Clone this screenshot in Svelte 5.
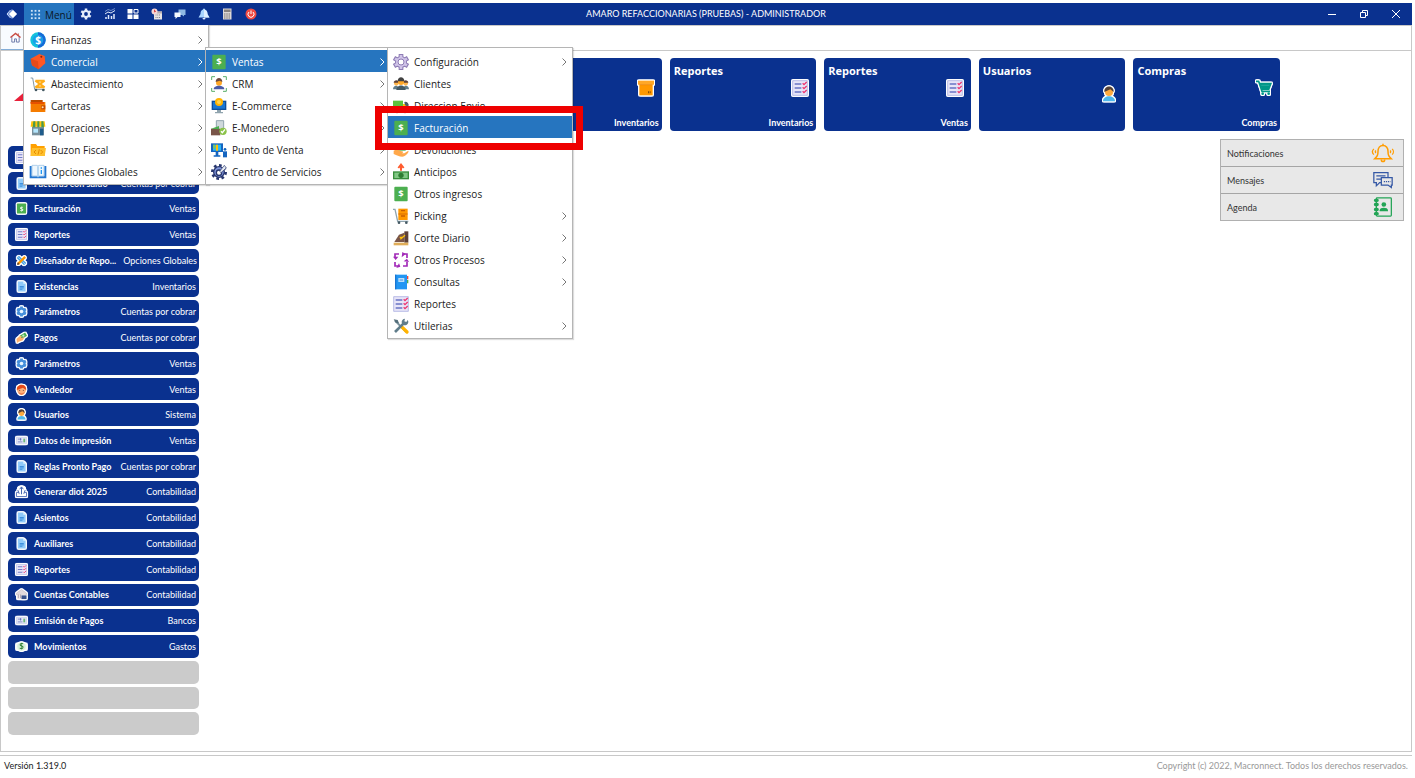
<script>
  const tools = [
    ['gear', 'Configuración'], ['chart', 'Indicadores'], ['tiles', 'Paneles'], ['calendar', 'Calendario'],
    ['chats', 'Mensajes'], ['bell', 'Notificaciones'], ['calc', 'Calculadora'], ['power', 'Salir']
  ];

  const salesMenu = [
    { icon: 'cog', label: 'Configuración', more: true },
    { icon: 'people', label: 'Clientes' },
    { icon: 'truck', label: 'Direccion Envio' },
    { icon: 'money', label: 'Facturación', active: true },
    { icon: 'refund', label: 'Devoluciones' },
    { icon: 'advance', label: 'Anticipos' },
    { icon: 'money', label: 'Otros ingresos' },
    { icon: 'picking', label: 'Picking', more: true },
    { icon: 'register', label: 'Corte Diario', more: true },
    { icon: 'cycle', label: 'Otros Procesos', more: true },
    { icon: 'book', label: 'Consultas', more: true },
    { icon: 'report', label: 'Reportes' },
    { icon: 'wrench', label: 'Utilerias', more: true }
  ];

  const commerceMenu = [
    { icon: 'money', label: 'Ventas', more: true, active: true, items: salesMenu },
    { icon: 'crm', label: 'CRM', more: true },
    { icon: 'ecommerce', label: 'E-Commerce', more: true },
    { icon: 'wallet2', label: 'E-Monedero', more: true },
    { icon: 'pos', label: 'Punto de Venta', more: true },
    { icon: 'service', label: 'Centro de Servicios', more: true }
  ];

  const mainMenu = [
    { icon: 'finance', label: 'Finanzas', more: true },
    { icon: 'tag', label: 'Comercial', more: true, active: true, items: commerceMenu },
    { icon: 'supply', label: 'Abastecimiento', more: true },
    { icon: 'wallet', label: 'Carteras', more: true },
    { icon: 'shop', label: 'Operaciones', more: true },
    { icon: 'folder', label: 'Buzon Fiscal', more: true },
    { icon: 'openbook', label: 'Opciones Globales', more: true }
  ];

  const shortcuts = [
    ['report', 'Reportes', 'Inventarios'],
    ['doc', 'Facturas con saldo', 'Cuentas por cobrar'],
    ['money', 'Facturación', 'Ventas'],
    ['report', 'Reportes', 'Ventas'],
    ['design', 'Diseñador de Repo...', 'Opciones Globales'],
    ['doc', 'Existencias', 'Inventarios'],
    ['params', 'Parámetros', 'Cuentas por cobrar'],
    ['pay', 'Pagos', 'Cuentas por cobrar'],
    ['params', 'Parámetros', 'Ventas'],
    ['seller', 'Vendedor', 'Ventas'],
    ['user', 'Usuarios', 'Sistema'],
    ['card', 'Datos de impresión', 'Ventas'],
    ['doc', 'Reglas Pronto Pago', 'Cuentas por cobrar'],
    ['upload', 'Generar diot 2025', 'Contabilidad'],
    ['doc', 'Asientos', 'Contabilidad'],
    ['doc', 'Auxiliares', 'Contabilidad'],
    ['report', 'Reportes', 'Contabilidad'],
    ['bank', 'Cuentas Contables', 'Contabilidad'],
    ['card', 'Emisión de Pagos', 'Bancos'],
    ['expense', 'Movimientos', 'Gastos'],
    null, null, null
  ];

  const cards = [
    ['money', 'Facturación', 'Ventas'],
    ['doc', 'Existencias', 'Inventarios'],
    ['box', '', 'Inventarios'],
    ['report', 'Reportes', 'Inventarios'],
    ['report', 'Reportes', 'Ventas'],
    ['user', 'Usuarios', ''],
    ['cart', 'Compras', 'Compras']
  ];

  const panels = [['ring', 'Notificaciones'], ['talk', 'Mensajes'], ['agenda', 'Agenda']];
</script>

{#snippet icon(name)}
  <svg class="icon" viewBox="0 0 24 24" aria-hidden="true">
    {#if name === 'logo'}
      <path d="M12 2l10 10-10 10L2 12z" fill="#6f8fd8" /><path d="M14 4l8 8-8 8-8-8z" fill="#fff" /><path d="M9 4l-7 8 7 8" fill="none" stroke="#cfdcfa" stroke-width="2" />
    {:else if name === 'apps'}
      {#each [2, 10, 18] as y}{#each [2, 10, 18] as x}<rect {x} {y} width="4" height="4" fill="#cfe4f8" />{/each}{/each}
    {:else if name === 'gear'}
      <g stroke="#e6edfb" stroke-width="5"><path d="M12 1v22M2.500 6.500l19 11M2.500 17.500l19-11" /></g><circle cx="12" cy="12" r="8" fill="#e6edfb" /><circle cx="12" cy="12" r="3.800" fill="#0a318f" />
    {:else if name === 'chart'}
      <path d="M4 22v-4M9 22v-8M15 22v-6M20 22V12" stroke="#dfe8fb" stroke-width="3" /><path d="M2 12l6-4 6 2 8-5" fill="none" stroke="#dfe8fb" stroke-width="2" /><path d="M2 7l6-4 6 2 8-4" fill="none" stroke="#91a9dc" stroke-width="1.500" />
    {:else if name === 'tiles'}
      <path d="M1 2h10v9H1zM1 13h10v9H1zM13 13h10v9H13z" fill="#fff" /><path d="M14 3h8v7h-8z" fill="none" stroke="#fff" stroke-width="2" />
    {:else if name === 'calendar'}
      <path d="M6 7h16v16H6z" fill="#e8e4e4" /><path d="M6 7h16v4H6z" fill="#b9aeb2" /><path d="M9 14h10M9 19h10" stroke="#8b8790" stroke-width="2" stroke-dasharray="2 1.500" /><circle cx="7" cy="7" r="6" fill="#f7d5d5" /><path d="M7 3.500V8l3-2" fill="none" stroke="#d94848" stroke-width="2" />
    {:else if name === 'chats'}
      <path d="M9 3h14v11h-3v3l-4-3H9z" fill="#8fb9e4" /><path d="M1 9h12v9H7l-4 4v-4H1z" fill="#f5faff" />
    {:else if name === 'bell'}
      <path d="M12 1c2 0 2 2 2 2 4 1 5 5 5 9l4 7H1l4-7c0-4 1-8 5-9 0 0 0-2 2-2z" fill="#a9d6ff" /><path d="M12 3c5 1 7 5 7 10l4 6H12z" fill="#dff0ff" /><path d="M9 20h6a3 3 0 01-6 0z" fill="#e5efff" />
    {:else if name === 'calc'}
      <path d="M4 1h17v22H4z" fill="#ddd8d6" /><path d="M6 3h13v5H6z" fill="#86817f" /><path d="M6 12h13M6 16h13M6 20h13" stroke="#77716f" stroke-width="2" stroke-dasharray="3 1.500" />
    {:else if name === 'power'}
      <circle cx="12" cy="12" r="11" fill="#f04b43" /><path d="M8 8a6 6 0 108 0M12 5v7" fill="none" stroke="#fff" stroke-width="2" />
    {:else if name === 'home'}
      <path d="M4 11v11h6v-7h4v7h6V11" fill="#fdfdff" stroke="#6573a5" stroke-width="2" /><path d="M1 12L12 3l11 9" fill="none" stroke="#c84a42" stroke-width="3" /><path d="M18 3v5" stroke="#c84a42" stroke-width="2" />
    {:else if name === 'finance'}
      <circle cx="12" cy="12" r="11.500" fill="#13c3dc" /><path d="M12 .5a11.500 11.500 0 010 23z" fill="#1769d8" /><circle cx="12" cy="12" r="8" fill="#18a0e8" /><text x="12" y="17.500" text-anchor="middle" font-size="15" font-weight="700" fill="#fff">$</text>
    {:else if name === 'tag'}
      <path d="M1 7L14 0l8 3 1 11-10 9-10-6z" fill="#ff5722" /><path d="M1 7l11 4 1 12-10-6z" fill="#e64a19" /><circle cx="17" cy="4" r="1.500" fill="#7a2a10" />
    {:else if name === 'supply'}
      <path d="M1 3h3l3 17h15" fill="none" stroke="#8298a5" stroke-width="1.500" /><path d="M8 7h14M8 17h14M8 7l14 10M22 7L8 17" stroke="#ffad19" stroke-width="3" /><circle cx="9" cy="21" r="2" fill="#455a64" /><circle cx="20" cy="21" r="2" fill="#455a64" />
    {:else if name === 'wallet'}
      <path d="M1 3h18v5H1z" fill="#b84b00" /><path d="M1 6h22v15H1z" fill="#f57c00" /><path d="M1 6h20v3H1z" fill="#e65100" /><path d="M17 11h6v6h-6z" fill="#c64a00" /><circle cx="19" cy="14" r="1.500" fill="#ffe0b2" />
    {:else if name === 'shop'}
      <path d="M3 10h18v13H3z" fill="#78909c" /><path d="M5 13h7v6H5z" fill="#b3e5fc" /><path d="M15 13h5v10h-5z" fill="#1e5c8c" /><path d="M2 2h20l1 8H1z" fill="#ffc107" /><path d="M5 2h3v9H4zM11 2h3v9h-3zM17 2h3l1 9h-4z" fill="#4a9a4e" />
    {:else if name === 'folder'}
      <path d="M1 3h8l2 3h11v15H1z" fill="#ffa000" /><path d="M3 9h21l-2 12H1z" fill="#ffc02d" /><path d="M9 12l-3 3 3 3M16 12l3 3-3 3M14 11l-2 8" fill="none" stroke="#e78b00" stroke-width="1.500" />
    {:else if name === 'openbook'}
      <path d="M1 3v17h22V3" fill="none" stroke="#2176d2" stroke-width="3" /><path d="M3 2h8l1 2 1-2h8v16h-8l-1 2-1-2H3z" fill="#eef7fd" stroke="#90bde4" /><path d="M12 4v15" stroke="#9cc8ea" stroke-width="2" /><path d="M17 5v2M17 9v6" stroke="#2196f3" stroke-width="2" />
    {:else if name === 'money'}
      <rect x="2" y="1" width="20" height="22" rx="1.500" fill="#4caf50" /><text x="12" y="17" text-anchor="middle" font-size="14" font-weight="700" fill="#fff">$</text>
    {:else if name === 'crm'}
      <path d="M1 6V1h5M18 1h5v5M23 18v5h-5M6 23H1v-5" fill="none" stroke="#5aae6a" stroke-width="1.500" /><circle cx="12" cy="10" r="4.500" fill="#ffa726" /><path d="M7 9c0-8 10-8 10 0l-4-2z" fill="#6d4c41" /><path d="M4 20c0-7 16-7 16 0z" fill="#4a5ba8" />
    {:else if name === 'ecommerce'}
      <path d="M1 4h22v14H1z" fill="#0d4f9c" /><path d="M3 6h18v10H3z" fill="#1976d2" /><path d="M9 18h6v3H9zM6 21h12v2H6z" fill="#90a4ae" /><circle cx="12" cy="6" r="6" fill="#ffb300" /><circle cx="12" cy="6" r="3" fill="#ffd54f" />
    {:else if name === 'wallet2'}
      <path d="M8 1h11v18H8z" fill="#cfd8dc" stroke="#90a4ae" stroke-width="1.500" /><path d="M0 13h14v10H0z" fill="#795548" /><path d="M0 13l12-4v5z" fill="#4caf50" /><circle cx="18" cy="17" r="5.500" fill="#8bc34a" /><path d="M15 17l2 2 4-5" fill="none" stroke="#fff" stroke-width="2" />
    {:else if name === 'pos'}
      <path d="M0 2h18v13H0z" fill="#1565c0" /><path d="M3 4h12v9H3z" fill="#29b6f6" /><path d="M9 4v9" stroke="#ffc107" stroke-width="3" /><path d="M5 4v6" stroke="#8bc34a" stroke-width="3" /><path d="M7 15h4v5H7zM4 20h10v2H4z" fill="#1565c0" /><path d="M18 14h6v9h-6z" fill="#1565c0" /><circle cx="21" cy="11" r="2" fill="#1565c0" />
    {:else if name === 'service'}
      <circle cx="12" cy="12" r="10" fill="none" stroke="#27366e" stroke-width="4" stroke-dasharray="4 3.800" /><circle cx="12" cy="12" r="8" fill="#8297db" stroke="#27366e" stroke-width="2" /><circle cx="12" cy="13" r="4" fill="#fff" stroke="#27366e" stroke-width="2" /><path d="M13 11l7-9 3 4-8 7z" fill="#e6eaf2" stroke="#27366e" />
    {:else if name === 'cog'}
      <g stroke="#8e7cb5" stroke-width="7"><path d="M12 0v24M1.500 6l21 12M1.500 18l21-12" /></g><circle cx="12" cy="12" r="9" fill="#8e7cb5" /><g stroke="#d0c4e8" stroke-width="4"><path d="M12 1.500v21M3 7l18 10M3 17L21 7" /></g><circle cx="12" cy="12" r="7.500" fill="#d0c4e8" /><circle cx="12" cy="12" r="4.500" fill="#fff" stroke="#8e7cb5" stroke-width="1.500" />
    {:else if name === 'people'}
      <circle cx="5" cy="11" r="3.500" fill="#ffb74d" /><path d="M1 10c0-5 8-5 8 0z" fill="#5d4037" /><circle cx="19" cy="11" r="3.500" fill="#ffb74d" /><path d="M15 10c0-5 8-5 8 0z" fill="#5d4037" /><path d="M0 20c0-7 9-7 9 0zM15 20c0-7 9-7 9 0z" fill="#607d8b" /><circle cx="12" cy="9" r="4.500" fill="#ffa726" /><path d="M7 8c0-8 10-8 10 0z" fill="#424242" /><path d="M5 21c0-9 14-9 14 0z" fill="#455a64" />
    {:else if name === 'truck'}
      <path d="M0 4h15v15H0z" fill="#5cc13c" /><path d="M15 9h5l4 5v5h-9z" fill="#ffc107" /><path d="M17 6a5 5 0 016 7l-5-2z" fill="#455a64" /><circle cx="6" cy="20" r="3" fill="#37474f" /><circle cx="18" cy="20" r="3" fill="#37474f" />
    {:else if name === 'refund'}
      <path d="M5 3h14v10H5z" fill="#4caf50" /><circle cx="12" cy="8" r="3" fill="#c8e6c9" /><path d="M1 13c5-3 8 0 12 1 3 0 3 2 0 3h4l6-4c2 2-5 9-9 9-5 0-8-2-13-4z" fill="#ffa84b" />
    {:else if name === 'advance'}
      <path d="M0 11h24v12H0z" fill="#388e3c" /><path d="M2 13h20v8H2z" fill="#81c784" /><circle cx="12" cy="17" r="4" fill="#2e7d32" /><path d="M12 10V2M8 6l4-5 4 5" fill="none" stroke="#ff5b2e" stroke-width="3" />
    {:else if name === 'picking'}
      <path d="M0 2h3l4 18h16" fill="none" stroke="#90a4ae" stroke-width="2" /><path d="M8 1h14v17H8z" fill="#ff9800" /><path d="M8 9h14" stroke="#d96c00" stroke-width="1.500" /><path d="M12 4h6M12 12h6" stroke="#c75e00" stroke-width="2" /><circle cx="9" cy="22" r="2" fill="#455a64" /><circle cx="20" cy="22" r="2" fill="#455a64" />
    {:else if name === 'register'}
      <path d="M2 18L9 7l8-3v14z" fill="#795548" /><path d="M17 2h6v17h-6z" fill="#5d4037" /><path d="M1 19h22v4H1z" fill="#e0ad58" /><path d="M10 11h4M11 14l7-6" stroke="#ffc107" stroke-width="2" />
    {:else if name === 'cycle'}
      <path d="M3 9V3h6M15 3h6v6M21 15v6h-6M9 21H3v-6" fill="none" stroke="#a22ab8" stroke-width="2.500" /><path d="M0 7l4 5 4-5zM14 0l-1 8 6-5zM16 14l5-4 3 5zM9 17l2 5-6 2z" fill="#a22ab8" />
    {:else if name === 'book'}
      <path d="M3 1h18v22H3z" fill="#2196f3" /><path d="M3 1h2v22H3z" fill="#1976d2" /><path d="M21 3h2v5h-2z" fill="#f44336" /><path d="M21 9h2v5h-2z" fill="#4caf50" /><path d="M8 6h9v6H8z" fill="#bbdefb" /><path d="M10 9h5" stroke="#64a8e6" stroke-width="2" />
    {:else if name === 'report'}
      <path d="M1 1h22v22H1z" fill="#e8e5f8" stroke="#9da2dc" /><path d="M4 6h10M4 12h10M4 18h10" stroke="#6874c4" stroke-width="2" /><path d="M16 5l2 2 4-4M16 11l2 2 4-4M16 17l2 2 4-4" fill="none" stroke="#ed3470" stroke-width="2" />
    {:else if name === 'wrench'}
      <path d="M3 4l17 17" stroke="#78909c" stroke-width="3" /><path d="M1 2l6 1 2 5-5-1z" fill="#546e7a" /><path d="M14 14l7 7" stroke="#ffb300" stroke-width="5" stroke-linecap="round" /><path d="M3 21L16 8" stroke="#607d8b" stroke-width="4" /><path d="M22 3a5 5 0 11-4-2l-1 4 3 1z" fill="#607d8b" />
    {:else if name === 'doc'}
      <path d="M4 1h12l5 5v17H4z" fill="#90caf9" /><path d="M16 1v5h5z" fill="#e1f5fe" /><path d="M8 12h9M8 15h9M8 18h6" stroke="#1976d2" stroke-width="1.500" />
    {:else if name === 'design'}
      <path d="M4 4l16 16" stroke="#4ba3e3" stroke-width="7" /><path d="M4 4l16 16" stroke="#d9efff" stroke-width="2" stroke-dasharray="2 2" /><path d="M4 20L20 4" stroke="#ff9800" stroke-width="5" /><path d="M2 22l2-6 4 4z" fill="#5d4037" />
    {:else if name === 'params'}
      <g stroke="#468fdb" stroke-width="6"><path d="M12 1v22M2.500 6.500l19 11M2.500 17.500l19-11" /></g><circle cx="12" cy="12" r="9" fill="#468fdb" /><circle cx="12" cy="12" r="4" fill="#e9f5ff" />
    {:else if name === 'pay'}
      <path d="M8 8l12-7 4 7-12 8z" fill="#4caf50" /><circle cx="16" cy="8" r="2.500" fill="#c8e6c9" /><path d="M1 15l8-7 4 1-3 4 6-1 3-2-4 8-9 3-4 3z" fill="#ffb06b" />
    {:else if name === 'seller'}
      <circle cx="12" cy="12" r="10" fill="#ffb07a" /><path d="M2 13C0-2 24-3 22 13L15 8z" fill="#e64a19" /><path d="M4 18c4 8 12 8 16 0l-8 2z" fill="#f0834f" /><path d="M7 14h2M15 14h2" stroke="#5d4037" stroke-width="2" />
    {:else if name === 'user'}
      <path d="M3 23c0-10 18-10 18 0z" fill="#4fb8ed" /><circle cx="12" cy="9" r="6" fill="#ffab40" /><path d="M5 9C4-2 20-2 19 9l-5-4z" fill="#544137" />
    {:else if name === 'card'}
      <path d="M1 5h22v14H1z" fill="#e1e5f6" stroke="#b3badf" /><path d="M4 9h8M4 15h10" stroke="#808bc7" stroke-width="2" /><path d="M16 8h4v8h-4z" fill="#69b879" /><path d="M10 7v5" stroke="#5b6ab8" stroke-width="2" />
    {:else if name === 'upload'}
      <path d="M1 14h22v9H1z" fill="#fff" stroke="#5470b8" stroke-width="2" /><circle cx="12" cy="9" r="8" fill="#fff" /><path d="M12 18V3M8 7l4-5 4 5M7 17L4 9M17 17l3-8" fill="none" stroke="#345aa8" stroke-width="2" />
    {:else if name === 'bank'}
      <path d="M1 9L12 1l11 8v3H1z" fill="#e2d9dd" stroke="#b6a7b0" /><path d="M3 12h18v10H3z" fill="#efe8e9" /><path d="M5 12v8M10 12v8" stroke="#a99ba8" stroke-width="2" /><path d="M12 14h11v8H12z" fill="#37508b" />
    {:else if name === 'expense'}
      <path d="M1 6h22v13H1z" fill="#eef7ee" /><circle cx="12" cy="12" r="9" fill="#d7efd8" /><text x="12" y="18" text-anchor="middle" font-size="17" font-weight="700" fill="#2e7d32">$</text>
    {:else if name === 'box'}
      <path d="M0 1h24v6H0z" fill="#ffa726" /><path d="M2 7h20v16H2z" fill="#ff9800" /><path d="M2 7h20" stroke="#e67e00" /><path d="M15 17h2v3h-2zM18 17h1v3h-1z" fill="#8a4b00" />
    {:else if name === 'cart'}
      <path d="M0 2h4l5 15h12" fill="none" stroke="#009688" stroke-width="2.500" /><path d="M5 4h19l-4 11H9z" fill="#009688" /><path d="M8 8h12" stroke="#37b5a7" /><circle cx="10" cy="20.500" r="2" fill="#009688" /><circle cx="19" cy="20.500" r="2" fill="#009688" />
    {:else if name === 'ring'}
      <path d="M12 3c-4 0-6 3-6 7 0 5-1 6-4 9h20c-3-3-4-4-4-9 0-4-2-7-6-7zM12 3V1M10 20c0 3 4 3 4 0" fill="none" stroke="#ff9c00" stroke-width="1.800" /><path d="M1 7c-2 2-2 5 0 7M23 7c2 2 2 5 0 7M3.500 9c-1 1-1 2 0 3M20.500 9c1 1 1 2 0 3" fill="none" stroke="#ff9c00" stroke-width="1.500" />
    {:else if name === 'talk'}
      <path d="M18 9V3H1v12h3v4l4-4h2M4 7h11M4 11h6" fill="none" stroke="#3558a5" stroke-width="1.500" /><path d="M10 9h13v9h-1v3l-4-3h-8z" fill="#e8e8e8" stroke="#3558a5" stroke-width="1.500" /><path d="M13 14h8" stroke="#3558a5" stroke-width="1.500" stroke-dasharray="1.500 1" />
    {:else if name === 'agenda'}
      <rect x="4" y="1" width="18" height="22" rx="1" fill="none" stroke="#22a455" stroke-width="1.500" /><path d="M3 4h2M3 9h2M3 15h2M3 20h2" stroke="#22a455" stroke-width="4" stroke-linecap="round" /><circle cx="13" cy="9" r="2.800" fill="#22a455" /><path d="M8 17v-1c0-4 10-4 10 0v1z" fill="#22a455" />
    {/if}
  </svg>
{/snippet}

{#snippet menu(items, cls)}
  <ul class="menu {cls}">
    {#each items as item}
      <li>
        <button class="entry" class:active={item.active}>
          {@render icon(item.icon)}
          <span>{item.label}</span>
          {#if item.more}
            <svg class="chevron" viewBox="0 0 5 8" aria-hidden="true"><path d="M.5.5L4 4 .5 7.500" fill="none" stroke="currentColor" /></svg>
          {/if}
        </button>
        {#if item.items}{@render menu(item.items, 'sub')}{/if}
      </li>
    {/each}
  </ul>
{/snippet}

<div class="window">
  <header class="titlebar">
    <div class="left">
      <span class="brand">{@render icon('logo')}</span>
      <div class="menu-anchor">
        <button class="menu-button">{@render icon('apps')}<span>Menú</span></button>
        {@render menu(mainMenu, 'root')}
      </div>
      <nav class="tools">
        {#each tools as [name, label]}
          <button aria-label={label}>{@render icon(name)}</button>
        {/each}
      </nav>
    </div>
    <h1>AMARO REFACCIONARIAS (PRUEBAS) - ADMINISTRADOR</h1>
    <div class="controls">
      <button aria-label="Minimizar"><svg viewBox="0 0 8 8"><path d="M0 4.500h8" /></svg></button>
      <button aria-label="Restaurar"><svg viewBox="0 0 8 8"><path d="M.5 2.500h5v5h-5zM2.500 2.500v-2h5v5h-2" /></svg></button>
      <button aria-label="Cerrar"><svg viewBox="0 0 8 8"><path d="M0 0l8 8M8 0L0 8" /></svg></button>
    </div>
  </header>

  <div class="workspace">
    <div class="tabs"><button class="tab" aria-label="Inicio">{@render icon('home')}</button></div>
    <div class="content">
      <aside>
        <svg class="company" viewBox="0 0 180 80" aria-hidden="true"><path d="M0 38L14 26v12z" fill="#e8203a" /></svg>
        <div class="shortcuts">
          {#each shortcuts as s}
            {#if s}
              <button class="shortcut">{@render icon(s[0])}<strong>{s[1]}</strong><span>{s[2]}</span></button>
            {:else}
              <div class="empty"></div>
            {/if}
          {/each}
        </div>
      </aside>
      <main>
        <div class="cards">
          {#each cards as [name, title, module]}
            <button class="card" class:plain={!module}><strong>{title}</strong>{@render icon(name)}<span>{module}</span></button>
          {/each}
        </div>
        <div class="panels">
          {#each panels as [name, label]}
            <button>{label}{@render icon(name)}</button>
          {/each}
        </div>
      </main>
    </div>
  </div>

  <footer><span>Versión 1.319.0</span><span class="copyright">Copyright (c) 2022, Macronnect. Todos los derechos reservados.</span></footer>
  <div class="highlight"></div>
</div>

<style>
  :global(body) { background: #fff; }
  * { box-sizing: border-box; }
  button { margin: 0; padding: 0; border: 0; background: none; font: inherit; color: inherit; cursor: pointer; }
  .icon { display: block; flex: none; width: 16px; height: 16px; overflow: visible; }
  .window {
    position: relative; display: flex; flex-direction: column; min-height: 100vh; padding: 3px 3px 0 0;
    font-family: Lato, "Open Sans", sans-serif; font-size: 9px; color: #222;
  }

  .titlebar { display: grid; grid-template-columns: 1fr auto 1fr; align-items: stretch; height: 22px; background: #0a318f; color: #fff; }
  .left { display: flex; }
  .brand { display: grid; place-items: center; width: 24px; }
  .brand .icon, .tools .icon { width: 12px; height: 12px; }
  .menu-anchor { position: relative; width: 50px; font-family: "Open Sans", sans-serif; font-size: 10px; }
  .menu-button { display: flex; align-items: center; gap: 4px; width: 100%; height: 100%; padding: 1px 0 0 6px; background: #2675bf; color: #0a1526; font-size: 10px; }
  .menu-button .icon { width: 11px; height: 11px; }
  .tools { display: flex; justify-content: space-between; align-items: center; width: 181px; margin-left: 4px; }
  .tools button { display: grid; place-items: center; width: 16px; height: 16px; }
  h1 { margin: 0; align-self: center; font-size: 9px; font-weight: 400; line-height: 12px; }
  .controls { display: flex; justify-content: flex-end; }
  .controls button { display: grid; place-items: center; width: 32px; }
  .controls svg { width: 8px; height: 8px; fill: none; stroke: #fff; overflow: visible; }

  .menu { position: absolute; z-index: 5; margin: 0; padding: 2px 0; list-style: none; background: #fff; border: 1px solid #b5b5b5; box-shadow: 1px 1px 1px #00000022; color: #222; }
  .root { top: 22px; left: -1px; width: 186px; padding-top: 3px; border-top: 0; }
  .root > li > .entry { padding-left: 6px; }
  .sub { top: -3px; left: 181px; width: 186px; }
  .menu li { position: relative; }
  .entry { display: flex; align-items: center; gap: 5px; width: 100%; height: 22px; padding: 1px 5px 0 5px; text-align: left; }
  .entry span { flex: 1; }
  .entry.active { background: #2675bf; color: #fff; }
  .chevron { width: 5px; height: 8px; color: #777; }
  .active .chevron { color: #fff; }

  .workspace { display: flex; flex: 1; flex-direction: column; border: 1px solid #c8c8c8; }
  .tabs { display: flex; height: 25px; border-bottom: 1px solid #c8c8c8; }
  .tab { display: grid; place-items: center; width: 28px; background: #f8fbff; border-bottom: 1px solid #83add8; }
  .tab .icon { width: 11px; height: 11px; }
  .content { display: flex; flex: 1; }
  aside { display: flex; flex-direction: column; width: 198px; padding: 12px 0 16px 7px; }
  .company { display: block; width: 180px; height: 80px; margin-left: 6px; }
  .shortcuts { display: grid; flex: 1; grid-auto-rows: 1fr; gap: 3px; margin-top: 3px; }
  .shortcut, .empty { min-height: 20px; border-radius: 5px; }
  .empty { background: #cbcbcb; }
  .shortcut { display: flex; align-items: center; gap: 7px; min-width: 0; padding: 0 3px 0 8px; background: #0a318f; color: #fff; white-space: nowrap; text-align: left; }
  .shortcut .icon { width: 11px; height: 11px; }
  .shortcut .icon, .card .icon { filter: drop-shadow(1px 0 0 #fff) drop-shadow(-1px 0 0 #fff) drop-shadow(0 1px 0 #fff) drop-shadow(0 -1px 0 #fff); }
  .shortcut strong { flex: 1; font-weight: 700; }

  main { display: flex; flex: 1; flex-direction: column; min-width: 0; padding: 7px 7px 0; }
  .cards { display: grid; grid-template-columns: repeat(7, 1fr); gap: 8px; margin-right: 124px; }
  .card { display: flex; flex-direction: column; align-items: flex-end; height: 73px; padding: 5px 3px 2px 4px; border-radius: 4px; background: #0a318f; color: #fff; }
  .card strong { align-self: flex-start; height: 17px; font-family: "Open Sans", sans-serif; font-size: 11px; line-height: 16px; }
  .card .icon { margin-right: 5px; }
  .card.plain .icon { margin-top: 6px; }
  .card span { margin-top: auto; line-height: 13px; font-weight: 700; }
  .panels { align-self: flex-end; width: 184px; margin-top: 8px; border: 1px solid #b0b0b0; background: #e8e8e8; }
  .panels button { display: flex; align-items: center; justify-content: space-between; width: 100%; height: 26px; padding: 0 8px 0 6px; color: #333; }
  .panels button + button { height: 27px; border-top: 1px solid #a5a5a5; }
  .panels .icon { width: 24px; height: 20px; }

  footer { display: flex; justify-content: space-between; align-items: center; height: 23px; margin-top: 3px; padding: 0 4px 3px; border-top: 1px solid #c8c8c8; }
  .copyright { color: #999; }
  .highlight { position: absolute; z-index: 10; top: 106px; left: 375px; width: 208px; height: 44px; border: 7px solid #ee0000; pointer-events: none; }
</style>
